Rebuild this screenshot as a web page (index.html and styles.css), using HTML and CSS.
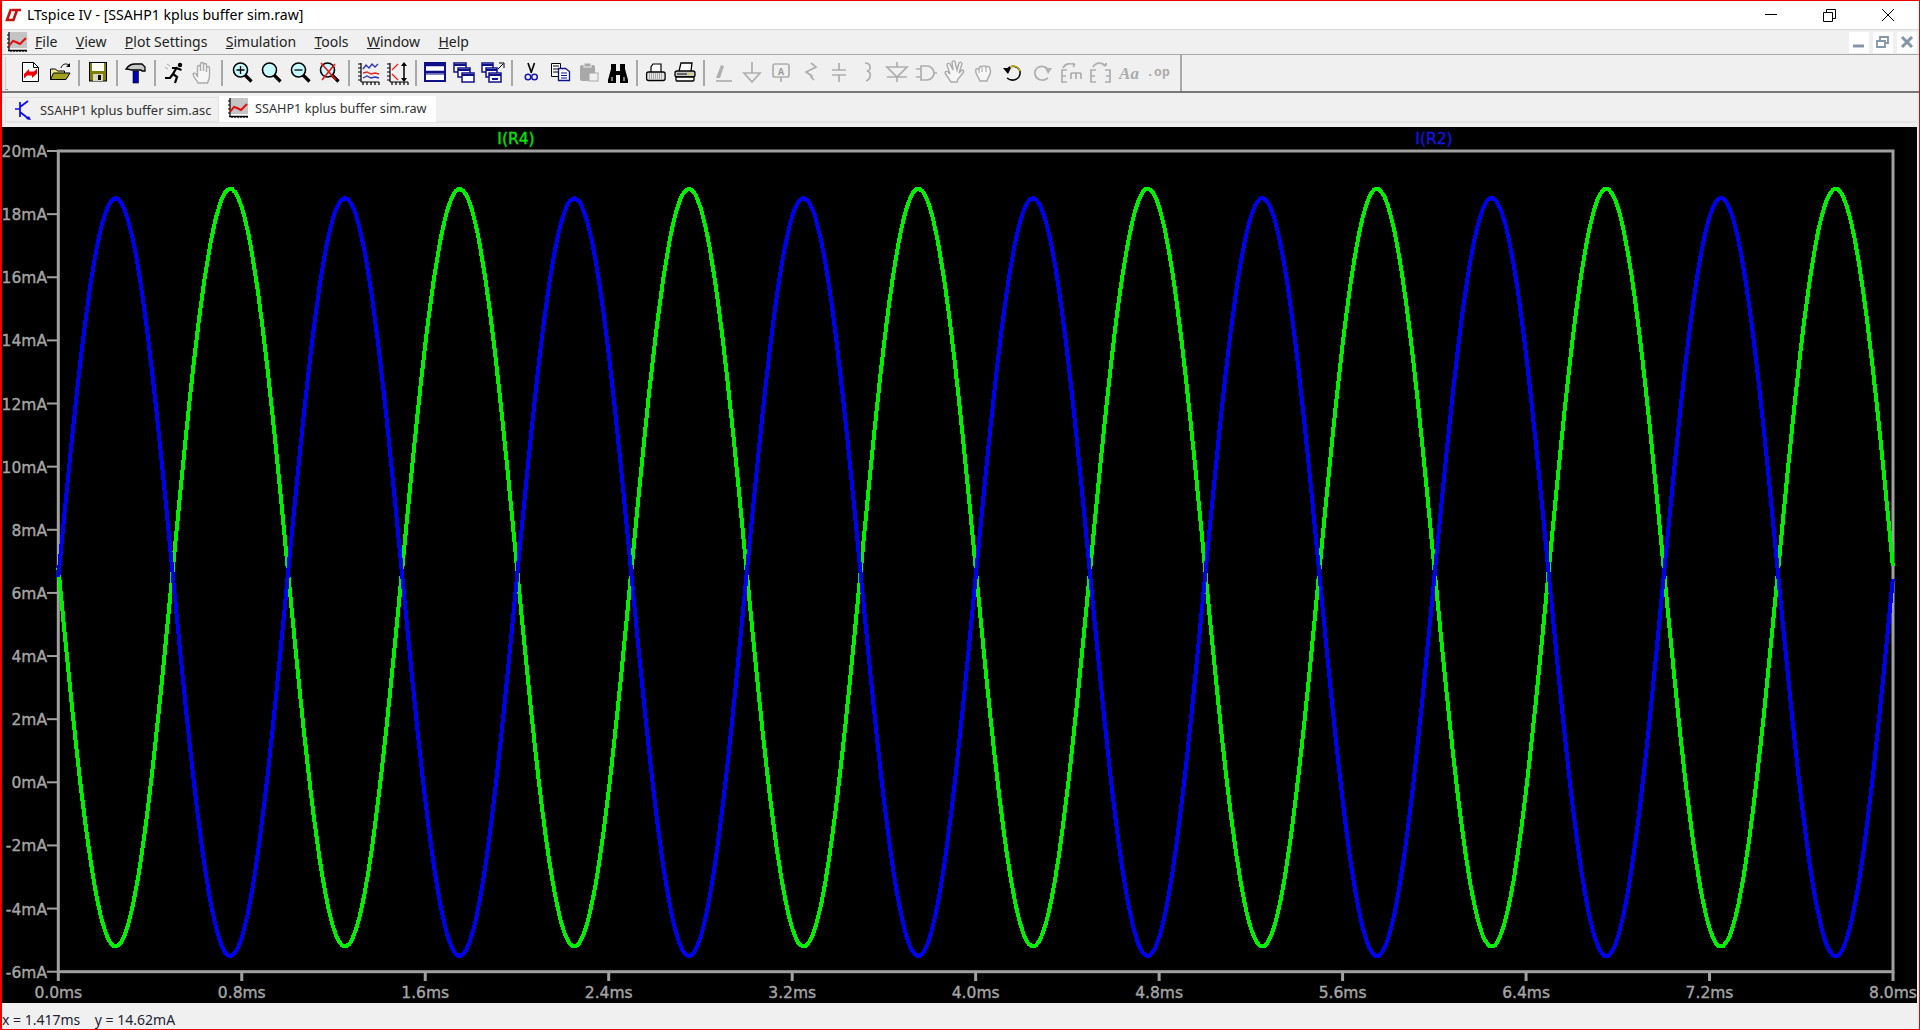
FILE: index.html
```html
<!DOCTYPE html>
<html lang="en">
<head>
    <meta charset="UTF-8">
    <title>LTspice IV - [SSAHP1 kplus buffer sim.raw]</title>
    <link rel="stylesheet" href="styles.css">
</head>
<body>

<svg class="defs" width="0" height="0">
    <symbol id="plot-icon" viewBox="0 0 22 22">
        <rect x="3" y="1" width="18" height="16" fill="#c4c4c4"/>
        <path d="M3 1v19M1 4h2M1 8h2M1 12h2M1 16h2M5 19v2M8 19v2M11 19v2M14 19v2M17 19v2M20 19v2" stroke="#000" stroke-width="1.2" fill="none"/>
        <path d="M2 19.5h19" stroke="#000" stroke-width="1.5" fill="none"/>
        <path d="M3 15l4-5 3 1 4 2 6-6" stroke="#e01010" stroke-width="2" fill="none"/>
    </symbol>
    <symbol id="lens" viewBox="0 0 26 26">
        <path d="M15 15l6.5 6.5" stroke="#000" stroke-width="3.2"/>
        <circle cx="10.5" cy="10" r="7" fill="#c6fbff" stroke="#000" stroke-width="1.6"/>
    </symbol>
    <symbol id="dots" viewBox="0 0 26 26">
        <path d="M6 3v19M6 22h18" stroke="#000" stroke-width="1.2" fill="none"/>
        <path d="M3 4h3M3 8h3M3 12h3M3 16h3M3 20h3M8 22v3M12 22v3M16 22v3M20 22v3M24 22v3" stroke="#000" stroke-width="1.2" fill="none"/>
    </symbol>
    <symbol id="open-hand" viewBox="0 0 26 26">
        <path d="M8 23c-1-3-5-6-5-9 1-1.500 2.500-1 3.500 1l1 1V7c0-2 3-2 3 0v4V4c0-2 3-2 3 0v7V5c0-2 3-2 3 0v7V8c0-2 3-2 3 0v8c0 3-1 4-2 7z" fill="#f6f6f6" stroke="#aaa" stroke-width="1.4"/>
    </symbol>
</svg>

<div class="window">

    <div class="titlebar">
        <svg class="lt-logo" width="18" height="14" viewBox="0 0 18 14">
            <path d="M7 1L3 12h6" stroke="#c81010" stroke-width="2.600" fill="none"/>
            <path d="M8 2h9M13 2L9 13" stroke="#c81010" stroke-width="2.600" fill="none"/>
        </svg>
        <span class="title-text">LTspice IV - [SSAHP1 kplus buffer sim.raw]</span>
        <div class="win-buttons">
            <svg width="58" height="28" viewBox="0 0 58 28"><path d="M0 13.500h12" stroke="#000"/></svg>
            <svg width="52" height="28" viewBox="0 0 52 28"><path d="M.5 11.500h9v9h-9zM3.500 11.500v-3h9v9h-3" stroke="#000" fill="none"/></svg>
            <svg width="26" height="28" viewBox="0 0 26 28"><path d="M7 8l12 12M19 8L7 20" stroke="#000"/></svg>
        </div>
    </div>

    <div class="menubar">
        <svg class="menu-icon" width="22" height="22"><use href="#plot-icon"/></svg>
        <nav class="menu-items">
            <span><u>F</u>ile</span>
            <span><u>V</u>iew</span>
            <span><u>P</u>lot Settings</span>
            <span><u>S</u>imulation</span>
            <span><u>T</u>ools</span>
            <span><u>W</u>indow</span>
            <span><u>H</u>elp</span>
        </nav>
        <div class="mdi-buttons">
            <div class="mdi-btn"><svg width="14" height="14" viewBox="0 0 14 14"><path d="M1 11h11" stroke="#8595a8" stroke-width="3"/></svg></div>
            <div class="mdi-btn"><svg width="14" height="14" viewBox="0 0 14 14"><path d="M1 6h8v6H1zM4 5V2h8v6h-2" stroke="#8595a8" stroke-width="1.800" fill="none"/></svg></div>
            <div class="mdi-btn"><svg width="14" height="14" viewBox="0 0 14 14"><path d="M2 2l10 10M12 2L2 12" stroke="#8595a8" stroke-width="3"/></svg></div>
        </div>
    </div>

    <div class="toolbar">
        <div class="grip"></div>

        <div class="tool"><svg viewBox="0 0 26 26"><path d="M4.500 2.500h11l5 5v14h-16z" fill="#fff" stroke="#000"/><path d="M15.500 2.500v5h5" fill="none" stroke="#000"/><path d="M6 14l5-5v2.500h5l3-3v5l-5 4.500v-2.500H9l-3 3z" fill="#f00000"/></svg></div>
        <div class="tool"><svg viewBox="0 0 26 26"><path d="M3.500 19.500V9h5l2 2h7v8.500z" fill="#f0e890" stroke="#000"/><path d="M3.500 19.500l3-6.500H23l-4 6.500z" fill="#a0a020" stroke="#000"/><path d="M14 8c1-4 5-5 8-3" fill="none" stroke="#000"/><path d="M23 3v4h-4z" fill="#000"/></svg></div>
        <div class="sep"></div>
        <div class="tool"><svg viewBox="0 0 26 26"><rect x="4.500" y="2.500" width="17" height="18.500" fill="#808000" stroke="#000"/><rect x="7" y="3" width="12" height="8" fill="#fff"/><rect x="8" y="14" width="10" height="7" fill="#d8d8c8"/><rect x="13" y="15" width="3" height="5" fill="#000"/></svg></div>
        <div class="sep"></div>
        <div class="tool"><svg viewBox="0 0 26 26"><path d="M3 9c2-3 5-5 9-5h7l3 3v4h-3l-1-1H8C6 9 5 9 3 9z" fill="#c8c8c8" stroke="#000" stroke-width="1.300"/><rect x="10" y="11" width="5.500" height="12" fill="#0000b8" stroke="#000" stroke-width=".6"/></svg></div>
        <div class="sep"></div>
        <div class="tool"><svg viewBox="0 0 26 26"><circle cx="19" cy="5" r="2.200"/><path d="M16 7l-4 7 4 3-2 6M12 14l-3 4H4M15.500 8l5 2M15.500 8L11 8" stroke="#000" stroke-width="2.200" fill="none"/><path d="M6 4l3 2M4 7l3 2" stroke="#aaa"/></svg></div>
        <div class="tool"><svg viewBox="0 0 26 26"><use href="#open-hand"/></svg></div>
        <div class="sep sep-wide"></div>

        <div class="tool"><svg viewBox="0 0 26 26"><use href="#lens"/><path d="M6.500 10h8M10.500 6v8" stroke="#000" stroke-width="1.300"/></svg></div>
        <div class="tool"><svg viewBox="0 0 26 26"><use href="#lens"/></svg></div>
        <div class="tool"><svg viewBox="0 0 26 26"><use href="#lens"/><path d="M6.500 10h8" stroke="#000" stroke-width="1.300"/></svg></div>
        <div class="tool"><svg viewBox="0 0 26 26"><use href="#lens"/><path d="M4 3l15 17M18 4L5 20" stroke="#f01010" stroke-width="1.600"/></svg></div>
        <div class="sep"></div>
        <div class="tool"><svg viewBox="0 0 26 26"><use href="#dots"/><path d="M8 9l3-4 3 3 3-4 3 3 3-3" stroke="#3030c0" fill="none" stroke-width="1.300"/><path d="M8 13l4-1 4 2 4-1 4 1" stroke="#f02020" fill="none" stroke-width="1.300"/><path d="M8 18l4-2 4 2 4-1 4 1" stroke="#3030c0" fill="none" stroke-width="1.300"/></svg></div>
        <div class="tool"><svg viewBox="0 0 26 26"><use href="#dots"/><path d="M8 10l6-6M8 14l6 6" stroke="#f02020" stroke-width="1.400" fill="none"/><path d="M20 5v15" stroke="#000" stroke-width="1.500"/><path d="M20 2l3 4h-6zM20 22l3-4h-6z" fill="#000"/></svg></div>
        <div class="sep"></div>

        <div class="tool"><svg viewBox="0 0 26 26"><rect x="3" y="3" width="20" height="18" fill="#fff" stroke="#10108a" stroke-width="2"/><path d="M3 5h20M3 12h20" stroke="#10108a" stroke-width="2.400"/><path d="M3 14h20" stroke="#10108a" stroke-width="1"/></svg></div>
        <div class="tool"><svg viewBox="0 0 26 26"><rect x="3" y="3" width="12" height="9" fill="#fff" stroke="#10108a" stroke-width="1.500"/><rect x="7" y="8" width="12" height="9" fill="#fff" stroke="#10108a" stroke-width="1.500"/><rect x="11" y="13" width="12" height="9" fill="#fff" stroke="#10108a" stroke-width="1.500"/><path d="M3 5h12M7 10h12M11 15h12" stroke="#10108a" stroke-width="2"/></svg></div>
        <div class="tool"><svg viewBox="0 0 26 26"><rect x="2" y="3" width="11" height="9" fill="#fff" stroke="#10108a" stroke-width="1.500"/><rect x="6" y="8" width="11" height="9" fill="#fff" stroke="#10108a" stroke-width="1.500"/><rect x="9" y="13" width="12" height="9" fill="#fff" stroke="#10108a" stroke-width="1.500"/><path d="M2 5h11M6 10h11M9 15h12M12 19h6" stroke="#10108a" stroke-width="1.800"/><path d="M18 9l5-5M19 3h5v5" stroke="#000" fill="none"/></svg></div>
        <div class="sep"></div>

        <div class="tool"><svg viewBox="0 0 26 26"><path d="M10 3l3.500 10M16.500 3L13 13" stroke="#000" stroke-width="1.600"/><circle cx="10" cy="17" r="2.800" fill="none" stroke="#1818b0" stroke-width="1.500"/><circle cx="16.500" cy="17" r="2.800" fill="none" stroke="#1818b0" stroke-width="1.500"/></svg></div>
        <div class="tool"><svg viewBox="0 0 26 26"><path d="M4.500 3.500h9v13h-9z" fill="#fff" stroke="#000"/><path d="M6 6h6M6 9h6M6 12h6" stroke="#000"/><path d="M11.500 8.500h7l4 3v9h-11z" fill="#fff" stroke="#10108a" stroke-width="1.300"/><path d="M14 13h6M14 15.500h6M14 18h6" stroke="#10108a"/></svg></div>
        <div class="tool"><svg viewBox="0 0 26 26"><rect x="4" y="5" width="15" height="16" rx="2" fill="#a8a8a8"/><rect x="8" y="3" width="7" height="4" fill="#a8a8a8" stroke="#f0f0f0"/><rect x="13" y="13" width="9" height="8" fill="#f0f0f0" stroke="#a8a8a8"/></svg></div>
        <div class="tool"><svg viewBox="0 0 26 26"><path d="M6 4h5v7h4V4h5v5l3 11v3h-8v-8h-4v8H3v-3L6 9z" fill="#000"/><path d="M7 17v4M19 17v4" stroke="#fff"/></svg></div>
        <div class="sep"></div>

        <div class="tool"><svg viewBox="0 0 26 26"><path d="M8 12V7l2-3h8v8" fill="#fff" stroke="#000" stroke-width="1.200"/><rect x="3.600" y="12" width="18.500" height="8.500" rx="2" fill="#e4e4e4" stroke="#000" stroke-width="1.300"/><path d="M6 14h14M6 16h14M6 18h14" stroke="#777" stroke-dasharray="1 1"/></svg></div>
        <div class="tool"><svg viewBox="0 0 26 26"><path d="M7 11l2-8h11l-1 8" fill="#fff" stroke="#000" stroke-width="1.300"/><rect x="3" y="11" width="20" height="6" rx="2" fill="#c8c8c8" stroke="#000" stroke-width="1.300"/><rect x="4" y="17" width="18" height="4" rx="1" fill="#fff" stroke="#000" stroke-width="1.300"/><path d="M5 14h10" stroke="#000"/><path d="M16 14h3" stroke="#e0d020" stroke-width="1.500"/></svg></div>
        <div class="sep"></div>

        <div class="tool"><svg viewBox="0 0 26 26"><path d="M6 18l5-13 3 1-4 12z" fill="#b0b0b0"/><path d="M6 21h16" class="dim"/></svg></div>
        <div class="tool"><svg viewBox="0 0 26 26"><path d="M13 2v11M5 13h16L13 22z" class="dim"/></svg></div>
        <div class="tool"><svg viewBox="0 0 26 26"><rect x="5" y="4" width="16" height="13" rx="2" class="dim"/><path d="M13 17v5" class="dim"/><text x="13" y="14.500" class="dim-letter">A</text></svg></div>
        <div class="tool"><svg viewBox="0 0 26 26"><path d="M14 3l5 4-10 5 6 4-1 1 3 3" class="dim"/></svg></div>
        <div class="tool"><svg viewBox="0 0 26 26"><path d="M13 3v7M6 10h14M6 15h14M13 15v7" class="dim"/></svg></div>
        <div class="tool"><svg viewBox="0 0 26 26"><path d="M10 3c6 0 7 7 2 8 5 1 4 8-1 10" class="dim"/></svg></div>
        <div class="tool"><svg viewBox="0 0 26 26"><path d="M13 2v5M3 7h20l-10 10zM3 17h20M13 17v5" class="dim"/></svg></div>
        <div class="tool"><svg viewBox="0 0 26 26"><path d="M8 6h6a7 7 0 0 1 0 14H8zM3 9h5M3 17h5M21 13h3" class="dim"/></svg></div>
        <div class="tool"><svg viewBox="0 0 26 26"><path d="M9 22L3 13c0-2 2-2 3-1l2 2-3-9c0-2 2-2 3-1l3 6-1-8c1-2 3-1 3 0l2 8 2-7c1-1 3-1 3 1l-3 9 3-3c2 0 2 2 1 3l-5 6-1 3z" fill="#f6f6f6" stroke="#aaa" stroke-width="1.400"/></svg></div>
        <div class="tool"><svg viewBox="0 0 26 26"><path d="M9 21l-3-6c-1-2-2-3-1-6 1-1 2 0 3 0 0-3 3-3 3-2 1-2 4-1 4 0 1-1 4-1 4 2 1 2 0 6-2 9l-1 3z" fill="#f6f6f6" stroke="#aaa" stroke-width="1.400"/><path d="M8 9v4M11 7v5M15 7v5" stroke="#aaa"/></svg></div>
        <div class="tool"><svg viewBox="0 0 26 26"><path d="M8 8c6-4 13 0 12 6-1 6-8 8-13 4" fill="none" stroke="#000" stroke-width="1.500"/><path d="M10 7c4-2 8-1 10 4" fill="none" stroke="#c8b020" stroke-width="1.500"/><path d="M3 8h8l-3 6z" fill="#000"/></svg></div>
        <div class="tool"><svg viewBox="0 0 26 26"><path d="M18 8c-6-4-13 0-12 6 1 6 8 8 13 4" class="dim"/><path d="M23 8h-7l3 6z" fill="#b0b0b0"/></svg></div>
        <div class="tool"><svg viewBox="0 0 26 26"><path d="M5 8c2-5 8-5 12-3M17 5l-2-2M17 5l-2 2M9 10H4v12h5M4 16h4M13 13h10M13 13v6M18 13v6M23 13v6" class="dim"/></svg></div>
        <div class="tool"><svg viewBox="0 0 26 26"><path d="M6 7c3-5 9-5 13-1M19 6l-3-1M19 6v-3M9 10H4v12h5M4 16h4M18 10h5v12h-5M23 16h-4" class="dim"/></svg></div>
        <div class="tool"><svg viewBox="0 0 26 26"><text x="13" y="19" class="dim-serif">Aa</text></svg></div>
        <div class="tool"><svg viewBox="0 0 26 26"><text x="13" y="16" class="dim-spice">.op</text></svg></div>
        <div class="sep sep-last"></div>
    </div>

    <div class="tabs">
        <div class="tab-row">
            <div class="tab">
                <svg width="20" height="22" viewBox="0 0 20 22"><path d="M6 3v15M1 10h5M6 8l8-6M6 13l9 7" stroke="#0808f0" stroke-width="1.700" fill="none"/><path d="M17 21l-5-1 3-3z" fill="#0808f0"/></svg>
                <span>SSAHP1 kplus buffer sim.asc</span>
            </div>
            <div class="tab tab-active">
                <svg width="22" height="22"><use href="#plot-icon"/></svg>
                <span>SSAHP1 kplus buffer sim.raw</span>
            </div>
        </div>
    </div>

    <div class="plot">
        <svg id="plotArea" class="plot-svg" viewBox="2 127 1915 876"></svg>
    </div>

    <div class="statusbar">x = 1.417ms&nbsp;&nbsp;&nbsp;&nbsp;y = 14.62mA</div>
</div>

<script src="app.js"></script>
</body>
</html>
```
FILE: styles.css
```css
body {
    margin: 0;
    overflow: hidden;
    font-family: "Noto Sans", sans-serif;
    color: #000;
    background: #f0f0f0;
}

.defs {
    position: absolute;
}

.window {
    width: 1920px;
    height: 1030px;
    box-sizing: border-box;
    display: flex;
    flex-direction: column;
    border: 1px solid #f00000;
    border-left-width: 2px;
    background: #f0f0f0;
}

.titlebar {
    height: 28px;
    display: flex;
    align-items: center;
    flex: none;
    background: #fff;
    border-bottom: 1px solid #d8d8d8;
}

.lt-logo {
    margin-left: 2px;
}

.title-text {
    margin-left: 5px;
    margin-bottom: 2px;
    font-size: 14.100px;
    white-space: nowrap;
}

.win-buttons {
    margin-left: auto;
    display: flex;
    margin-right: 18px;
}

.menubar {
    height: 24px;
    flex: none;
    display: flex;
    align-items: center;
    border-bottom: 1px solid #a8a8a8;
}

.menu-icon {
    margin-left: 4px;
}

.menu-items {
    display: flex;
    gap: 18.400px;
    margin-left: 7px;
    margin-bottom: 2px;
    font-size: 14px;
    color: #222;
}

.mdi-buttons {
    margin-left: auto;
    display: flex;
    gap: 4px;
    margin-right: 2px;
}

.mdi-btn {
    width: 20px;
    height: 21px;
    background: #fff;
    display: flex;
    align-items: center;
    justify-content: center;
}

.toolbar {
    height: 36px;
    flex: none;
    display: flex;
    align-items: center;
    border-bottom: 2px solid #787878;
}

.grip {
    width: 2px;
    height: 32px;
    margin-left: 3px;
    margin-right: 8px;
    border-left: 1px solid #d0d0d0;
    border-bottom: 1px solid #a0a0a0;
}

.tool {
    width: 29px;
    height: 26px;
    flex: none;
    display: flex;
    justify-content: center;
}

.tool svg {
    width: 26px;
    height: 26px;
}

.sep {
    width: 2px;
    height: 26px;
    margin: 0 3.500px;
    flex: none;
    background: #a8a8a8;
}

.sep-wide {
    margin-right: 5.500px;
}

.sep-last {
    margin-left: 8px;
    height: 36px;
}

.dim {
    fill: none;
    stroke: #aeaeae;
    stroke-width: 1.700;
}

.dim-letter {
    font: bold 10px "Liberation Mono", monospace;
    fill: #999;
    text-anchor: middle;
}

.dim-serif {
    font: italic bold 17px "Liberation Serif", serif;
    fill: #aaa;
    text-anchor: middle;
}

.dim-spice {
    font: bold 13px "Liberation Mono", monospace;
    fill: #aaa;
    text-anchor: middle;
}

.tabs {
    height: 34px;
    flex: none;
    padding: 2px 2px 0 3px;
    box-sizing: border-box;
}

.tab-row {
    height: 26px;
    display: flex;
    align-items: flex-end;
    border-bottom: 2px solid #e4e4e4;
}

.tab {
    height: 24px;
    width: 214px;
    box-sizing: border-box;
    display: flex;
    align-items: center;
    padding-left: 8px;
    gap: 6px;
    font-size: 12.900px;
    color: #333;
    border: 1px solid #e2e2e2;
    border-bottom: none;
}

.tab-active {
    height: 26px;
    width: 217px;
    padding-left: 8px;
    padding-bottom: 2px;
    gap: 6px;
    font-size: 12.700px;
    background: #fff;
    border: none;
    margin-bottom: -1px;
}

.plot {
    flex: 1;
    background: #000;
    margin-right: 2px;
    min-height: 0;
}

.plot-svg {
    display: block;
    width: 100%;
    height: 100%;
}

.axis {
    fill: none;
    stroke: #a0a0a0;
    stroke-width: 3;
}

.tick {
    stroke: #a0a0a0;
    stroke-width: 2;
}

.axis-label {
    font: 15.500px "DejaVu Sans", sans-serif;
    fill: #a4a4a4;
    stroke: #a4a4a4;
    stroke-width: .4;
}

.trace-label {
    font: 15.500px "DejaVu Sans", sans-serif;
    text-anchor: middle;
    stroke-width: .3;
}

.trace {
    fill: none;
    stroke-width: 4;
    stroke-linejoin: round;
    shape-rendering: crispEdges;
}

.statusbar {
    height: 23px;
    flex: none;
    margin-top: 3px;
    font-size: 14px;
    line-height: 27px;
    color: #223;
    white-space: nowrap;
}
```
FILE: app.js
```js
const svgNS = "http://www.w3.org/2000/svg";
const plot = document.getElementById("plotArea");

const left = 58.3, right = 1893;
const top_ = 151, bottom = 971.7;
const yMax = 20, yMin = -6, xMaxMs = 8;

function add(tag, attrs, text) {
    const el = document.createElementNS(svgNS, tag);
    for (const key in attrs) el.setAttribute(key, attrs[key]);
    if (text) el.textContent = text;
    plot.appendChild(el);
    return el;
}

function xPos(ms) {
    return left + (right - left) * ms / xMaxMs;
}

function yPos(mA) {
    return top_ + (bottom - top_) * (yMax - mA) / (yMax - yMin);
}

// y axis labels and ticks
for (let mA = yMax; mA >= yMin; mA -= 2) {
    const y = yPos(mA);
    add("path", { d: `M47 ${y}H${left}`, class: "tick" });
    add("text", { x: 47, y: y + 6, "text-anchor": "end", class: "axis-label" }, mA + "mA");
}

// x axis labels and ticks
for (let i = 0; i <= 10; i++) {
    const ms = i * 0.8;
    const x = xPos(ms);
    add("path", { d: `M${x} ${bottom}V981`, class: "tick", style: "stroke-width:3" });
    add("text", { x: x, y: 998, "text-anchor": "middle", class: "axis-label" }, ms.toFixed(1) + "ms");
}

add("rect", { x: left, y: top_, width: right - left, height: bottom - top_, class: "axis" });

add("text", { x: 516, y: 144, class: "trace-label", fill: "#00e800", stroke: "#00e800" }, "I(R4)");
add("text", { x: 1434, y: 144, class: "trace-label", fill: "#1414e0", stroke: "#1414e0" }, "I(R2)");

// 1kHz sine, sign gives the phase of the trace
function trace(offset, amp, sign, color) {
    const points = [];
    for (let x = left; x <= right; x += 1.5) {
        const t = (x - left) / (right - left) * xMaxMs;
        const mA = offset + sign * amp * Math.sin(2 * Math.PI * t);
        points.push(x.toFixed(1) + "," + Math.round(yPos(mA)));
    }
    add("polyline", { points: points.join(" "), class: "trace", stroke: color });
}

trace(6.8, 12, -1, "#00f000");
trace(6.5, 12, 1, "#0000f0");
```
